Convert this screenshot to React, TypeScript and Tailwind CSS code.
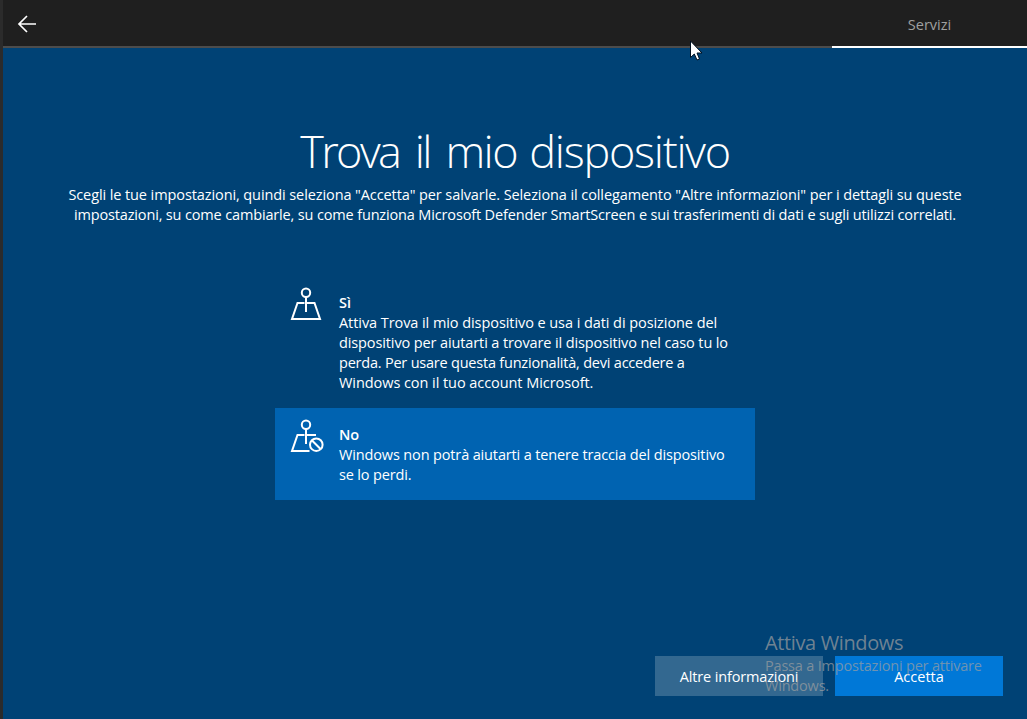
import React from "react";

type Line = { text: string; cls: string };

function Lines({ lines }: { lines: Line[] }) {
  return (
    <>
      {lines.map((l) => (
        <span key={l.text} className={`block h-5 whitespace-nowrap ${l.cls}`}>
          {l.text}
        </span>
      ))}
    </>
  );
}

const intro: Line[] = [
  {
    text: 'Scegli le tue impostazioni, quindi seleziona "Accetta" per salvarle. Seleziona il collegamento "Altre informazioni" per i dettagli su queste',
    cls: "tracking-[-0.095px]",
  },
  {
    text: "impostazioni, su come cambiarle, su come funziona Microsoft Defender SmartScreen e sui trasferimenti di dati e sugli utilizzi correlati.",
    cls: "tracking-[-0.152px]",
  },
];

const yesLines: Line[] = [
  { text: "Attiva Trova il mio dispositivo e usa i dati di posizione del", cls: "tracking-[-0.07px]" },
  { text: "dispositivo per aiutarti a trovare il dispositivo nel caso tu lo", cls: "tracking-[-0.115px]" },
  { text: "perda. Per usare questa funzionalità, devi accedere a", cls: "tracking-[-0.215px]" },
  { text: "Windows con il tuo account Microsoft.", cls: "tracking-[-0.06px]" },
];

const noLines: Line[] = [
  { text: "Windows non potrà aiutarti a tenere traccia del dispositivo", cls: "tracking-[-0.142px]" },
  { text: "se lo perdi.", cls: "tracking-[-0.16px]" },
];

function LocationIcon({ blocked = false }: { blocked?: boolean }) {
  return (
    <svg width="34" height="34" viewBox="0 0 34 34" fill="none" stroke="white" strokeWidth="2" className="shrink-0">
      <circle cx="16" cy="5.700" r="4.200" />
      <path d="M16 10V25" />
      {blocked ? (
        <>
          <path d="M14.500 16H7.500L2 32H19.500M17 16H26" />
          <circle cx="26.300" cy="25.700" r="6.300" />
          <path d="M21.800 21.200L30.800 30.200" />
        </>
      ) : (
        <path d="M14.500 16H7.500L2 32H30L24.500 16H17" />
      )}
    </svg>
  );
}

function Option({ title, lines, selected = false }: { title: string; lines: Line[]; selected?: boolean }) {
  return (
    <div className={`flex w-[480px] pl-[15px] text-left ${selected ? "h-[92px] bg-[#0063b1]" : "h-[132px]"}`}>
      <div className="w-[49px] shrink-0 pt-[11px]">
        <LocationIcon blocked={selected} />
      </div>
      <div className="pt-[17px]">
        <div className="h-5 font-semibold">{title}</div>
        <Lines lines={lines} />
      </div>
    </div>
  );
}

export default function App() {
  return (
    <div className="relative flex h-[719px] w-[1027px] overflow-hidden bg-[#004275] font-['Open_Sans',sans-serif] text-[14.5px] leading-5 text-white">
      <div className="w-[3px] shrink-0 bg-[#2b2b2b]" />
      <div className="flex min-w-0 flex-1 flex-col">
        <header className="flex h-12 shrink-0 bg-[#1f1f1f]">
          <div className="flex flex-1 border-b-2 border-[#4c4c4c] pl-[14px] pt-[14px]">
            <svg width="20" height="20" viewBox="0 0 20 20" fill="none" stroke="white" strokeWidth="1.700">
              <path d="M19 10H2M10 2L2 10L10 18" />
            </svg>
          </div>
          <div className="w-[195px] border-b-2 border-white pt-[15px] text-center text-[#a0a0a0]">Servizi</div>
        </header>
        <main className="flex flex-1 flex-col items-center">
          <h1 className="mt-[73px] h-16 whitespace-nowrap text-[45px] font-light leading-[60px] tracking-[-1.28px]">
            <span className="tracking-[-2.6px]">Trova</span>
            <span className="[word-spacing:5px]"> </span>
            <span className="tracking-[-2.5px]">il</span>
            <span className="[word-spacing:5px]"> </span>
            <span className="tracking-[-1.6px]">mio</span>
            <span className="[word-spacing:2px]"> </span>
            <span>dispositivo</span>
          </h1>
          <div className="flex flex-col items-center">
            <Lines lines={intro} />
          </div>
          <div className="mt-[51px]">
            <Option title="Sì" lines={yesLines} />
            <Option title="No" lines={noLines} selected />
          </div>
        </main>
        <footer className="mb-[23px] mr-6 flex justify-end gap-3">
          <button className="h-10 w-[168px] bg-[#336890] pt-0.5 tracking-[-0.15px]">Altre informazioni</button>
          <button className="h-10 w-[168px] bg-[#0078d7] pt-0.5">Accetta</button>
        </footer>
      </div>
      <div className="pointer-events-none absolute left-[765px] top-[631px] text-[#a0a0a0]/70">
        <div className="h-[25px] whitespace-nowrap text-[20px] leading-6 tracking-[-0.37px]">Attiva Windows</div>
        <Lines
          lines={[
            { text: "Passa a Impostazioni per attivare", cls: "tracking-[-0.19px]" },
            { text: "Windows.", cls: "tracking-[-0.19px]" },
          ]}
        />
      </div>
      <svg className="absolute left-[690px] top-10" width="16" height="24" viewBox="0 0 16 24">
        <path d="M.5 1V17.500L4.300 14L7 20L9.500 19L7 13H12Z" fill="white" stroke="#001020" />
      </svg>
    </div>
  );
}
